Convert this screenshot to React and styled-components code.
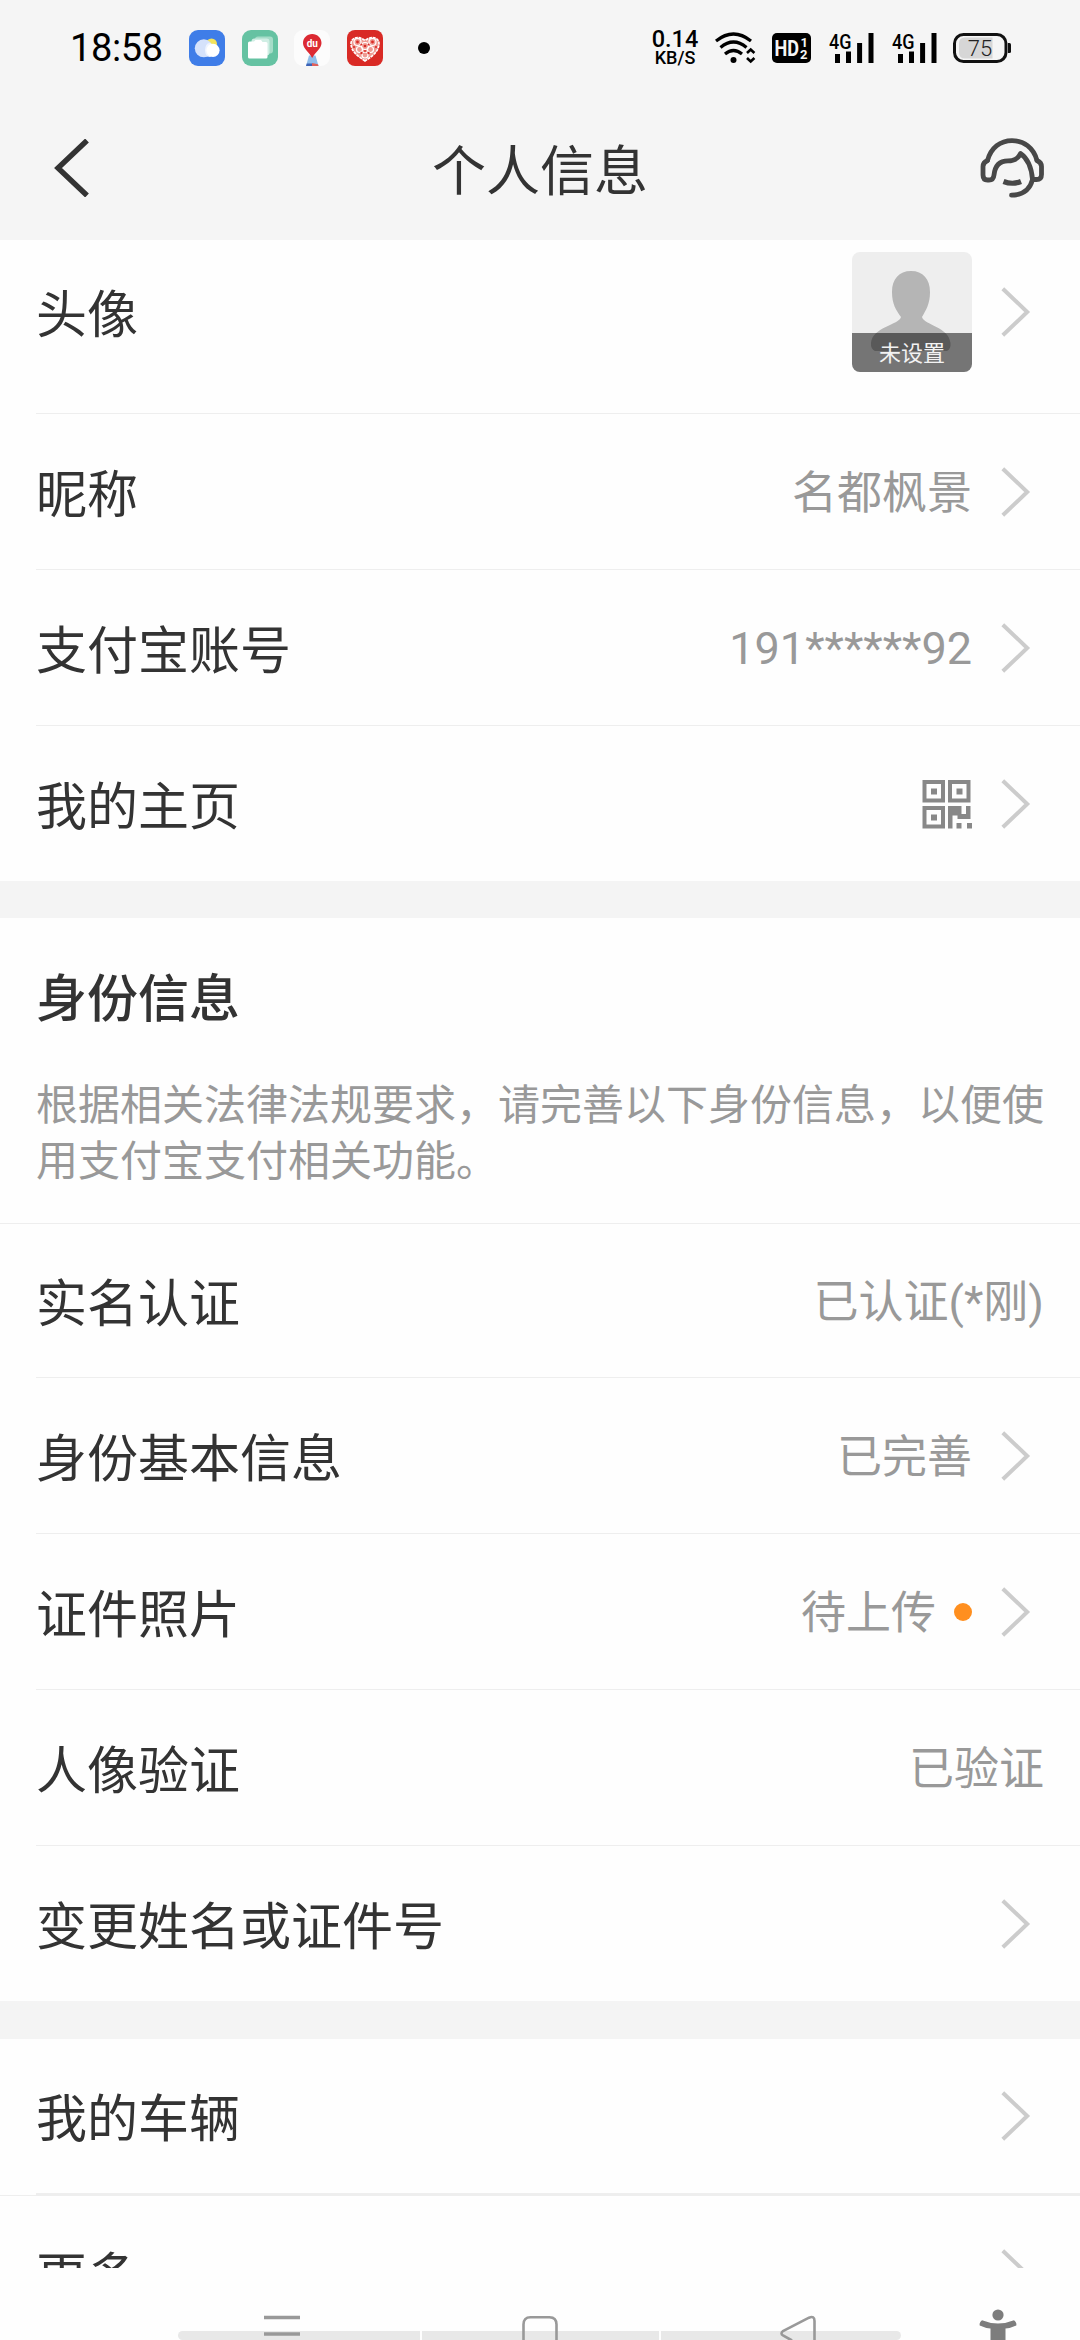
import React from "react";
import styled, { createGlobalStyle } from "styled-components";

const GlobalStyle = createGlobalStyle`
  * { box-sizing: border-box; }
  body {
    margin: 0;
    background: #fefefe;
    font-family: Roboto, "Noto Sans CJK SC", sans-serif;
    color: #333;
  }
  svg { display: block; flex: none; }
`;

const Screen = styled.div`
  width: 1080px;
  height: 2340px;
  display: flex;
  flex-direction: column;
  overflow: hidden;
  background: #fefefe;
`;

const StatusBar = styled.div`
  height: 96px;
  flex: none;
  padding: 0 68px 0 70px;
  display: flex;
  align-items: center;
  justify-content: space-between;
  background: #f5f5f5;
  color: #000;
`;

const StatusLeft = styled.div`
  display: flex;
  align-items: center;
`;

const Clock = styled.span`
  width: 119px;
  font-size: 38px;
  line-height: 44px;
  letter-spacing: -0.4px;
`;

const AppIcons = styled.div`
  display: flex;
  gap: 16.7px;
`;

const MoreDot = styled.span`
  width: 12px;
  height: 12px;
  margin-left: 35px;
  border-radius: 50%;
  background: #000;
`;

const StatusRight = styled.div`
  display: flex;
  align-items: center;
`;

const NetSpeed = styled.div`
  width: 46px;
  margin-right: 17px;
  display: flex;
  flex-direction: column;
  align-items: center;
  font-weight: 500;
`;

const SpeedValue = styled.span`
  font-size: 23.5px;
  line-height: 19px;
  padding-top: 1px;
`;

const SpeedUnit = styled.span`
  font-size: 18px;
  line-height: 18px;
`;

const SignalGroup = styled.div`
  display: flex;
  gap: 18px;
  margin: 0 16px 0 18px;
`;

const HdSlot = styled.div`
  margin-left: 16px;
`;

const TitleBar = styled.header`
  height: 144px;
  flex: none;
  padding: 0 36px 0 54px;
  display: grid;
  grid-template-columns: 64px 1fr 64px;
  align-items: center;
  background: #f5f5f5;
`;

const Title = styled.h1`
  margin: 10px 0 0;
  padding-right: 18px;
  text-align: center;
  font-size: 54px;
  font-weight: 400;
  line-height: 60px;
`;

const Content = styled.main`
  height: 2028px;
  flex: none;
  overflow: hidden;
`;

const Group = styled.section`
  margin-bottom: ${(p) => p.$gap || 0}px;
  background: #fefefe;
`;

const Page = styled.div`
  background: #f4f4f4;
`;

const Row = styled.div`
  height: ${(p) => p.$height || 156}px;
  margin-left: 36px;
  padding: ${(p) => p.$pad || "0"};
  padding-right: 36px;
  display: flex;
  align-items: center;
  justify-content: space-between;
  border-bottom: ${(p) => (p.$line === undefined ? 1 : p.$line)}px solid #eee;
`;

const FullLine = styled.div`
  height: 1px;
  background: #eee;
`;

const Label = styled.span`
  font-size: 51px;
  line-height: 60px;
  white-space: nowrap;
  padding-top: 8px;
`;

const Value = styled.span`
  font-size: 45px;
  line-height: 54px;
  color: #999;
  white-space: nowrap;
  padding-top: ${(p) => (p.$latin ? 2 : 5)}px;
`;

const Trailing = styled.div`
  display: flex;
  align-items: center;
`;

const ArrowSlot = styled.span`
  width: 72px;
  padding-left: 29px;
`;

const Badge = styled.span`
  width: 18px;
  height: 18px;
  margin-left: 18px;
  border-radius: 50%;
  background: #ff8f1f;
`;

const Avatar = styled.div`
  position: relative;
  width: 120px;
  height: 120px;
  border-radius: 8px;
  overflow: hidden;
  background: #eee;
`;

const AvatarCaption = styled.span`
  position: absolute;
  left: 0;
  right: 0;
  bottom: 0;
  height: 39px;
  padding-top: 2px;
  background: rgba(0, 0, 0, 0.51);
  color: #f2f2f2;
  font-size: 22px;
  line-height: 38px;
  text-align: center;
`;

const SectionIntro = styled.div`
  height: 306px;
  padding: 52px 36px 0;
  border-bottom: 1px solid #eee;
`;

const SectionTitle = styled.h2`
  margin: 0;
  font-size: 51px;
  line-height: 60px;
  font-weight: 500;
`;

const SectionText = styled.p`
  margin: 48px 0 0;
  font-size: 42px;
  line-height: 56px;
  color: #999;
  white-space: nowrap;
`;

const NavBar = styled.nav`
  position: relative;
  height: 72px;
  flex: none;
  padding-left: 264px;
  display: flex;
  align-items: flex-end;
  background: #fefefe;
`;

const NavTray = styled.div`
  position: absolute;
  left: 178px;
  bottom: 0;
  width: 723px;
  height: 9px;
  display: flex;
  gap: 2px;
  border-radius: 5px;
  overflow: hidden;
`;

const TrayPart = styled.span`
  flex: ${(p) => p.$w};
  background: #e8e8e8;
`;

const NavItem = styled.span`
  position: relative;
  margin-right: ${(p) => p.$after || 0}px;
`;

const Arrow = () => (
  <svg width="30" height="50" viewBox="0 0 30 50">
    <path d="M1.8 1.8 L26.2 25 L1.8 48.2" fill="none" stroke="#ccc" strokeWidth="4" />
  </svg>
);

const WeatherIcon = () => (
  <svg width="36" height="36" viewBox="0 0 36 36">
    <rect width="36" height="36" rx="9" fill="#3f7de8" />
    <circle cx="22.5" cy="14" r="5.5" fill="#f3e35c" />
    <circle cx="14.800" cy="18.300" r="9" fill="#d5e2fb" />
    <ellipse cx="20.500" cy="20" rx="4.500" ry="7" fill="#eef4ff" />
    <circle cx="24" cy="20.300" r="6.600" fill="#fff" />
  </svg>
);

const NotesIcon = () => (
  <svg width="36" height="36" viewBox="0 0 36 36">
    <rect width="36" height="36" rx="9" fill="#65c2a2" />
    <rect x="13" y="6.5" width="18" height="17" rx="3" fill="#a5dcc8" />
    <rect x="9.5" y="8.5" width="18" height="17" rx="3" fill="#d0eee4" />
    <path d="M6 13 q0-1.5 1.5-1.5 H12 l1.5-1.5 H19 l1.5 2 H24 q1.5 0 1.5 1.5 V27 q0 1.5-1.5 1.5 H7.5 Q6 28.500 6 27Z" fill="#fff" />
  </svg>
);

const PinText = styled.text`
  font: 700 10px Roboto, sans-serif;
  fill: #fff;
`;

const MapIcon = () => (
  <svg width="36" height="36" viewBox="0 0 36 36">
    <rect width="36" height="36" rx="9" fill="#fcfcfc" />
    <path d="M15 25.500 H21.500 L24.500 36 H12Z" fill="#8fbdea" />
    <path d="M12.800 33.500 H18 V36 H12Z" fill="#3c62b5" />
    <path d="M18 33 L24 34.200 L24.500 36 H18Z" fill="#e0605a" />
    <path d="M18.200 4 C23.500 4 27.500 8 27.500 13 C27.500 19 21 22 18.200 28 C15.400 22 9 19 9 13 C9 8 13 4 18.200 4Z" fill="#dc2a33" />
    <PinText x="18.300" y="16.800" textAnchor="middle">du</PinText>
  </svg>
);

const HeartIcon = () => (
  <svg width="36" height="36" viewBox="0 0 36 36">
    <rect width="36" height="36" rx="8" fill="#d92a25" />
    <path
      d="M18 31 C12 27 4 22 4 13.500 C4 8 11 5 18 10.500 C25 5 32 8 32 13.500 C32 22 24 27 18 31Z"
      fill="#ef9a92"
      stroke="#fff"
      strokeWidth="1.600"
      strokeDasharray="3 0.800"
    />
    <g fill="none" stroke="#fff" strokeWidth="1.200">
      <circle cx="10.500" cy="12" r="3.500" />
      <circle cx="25.500" cy="12" r="3.500" />
      <circle cx="18" cy="16" r="3.500" />
      <circle cx="12.500" cy="19.500" r="3" />
      <circle cx="23.500" cy="19.500" r="3" />
      <circle cx="18" cy="25" r="3" />
    </g>
    <g fill="#d92a25">
      <circle cx="10.500" cy="12" r="1.400" />
      <circle cx="25.500" cy="12" r="1.400" />
      <circle cx="18" cy="16" r="1.300" />
      <circle cx="14.500" cy="23" r="1.200" />
      <circle cx="21.500" cy="23" r="1.200" />
      <circle cx="7" cy="17" r="1.100" />
      <circle cx="29" cy="17" r="1.100" />
      <circle cx="18" cy="21" r="1" />
      <circle cx="14.300" cy="14.500" r="1" />
      <circle cx="21.700" cy="14.500" r="1" />
    </g>
  </svg>
);

const WifiIcon = () => (
  <svg width="41" height="32" viewBox="0 0 41 32">
    <g fill="none" stroke="#000" strokeWidth="3.200">
      <path d="M1 9 Q18.500 -5 36 9" />
      <path d="M5.500 15.500 Q18.500 4.500 31.500 15.500" />
      <path d="M10 22 Q18.500 15 27 22" />
    </g>
    <circle cx="18.500" cy="28" r="3" />
    <path d="M32 21 L35.700 17.500 L39.400 21 M32 26 L35.700 29.500 L39.400 26" fill="none" stroke="#000" strokeWidth="2.600" />
  </svg>
);

const HdText = styled.text`
  font: 700 ${(p) => p.$size}px Roboto, sans-serif;
  fill: #f5f5f5;
`;

const HdIcon = () => (
  <svg width="39" height="30" viewBox="0 0 39 30">
    <rect width="39" height="30" rx="5" />
    <HdText $size={22} x="2.500" y="23" textLength="24.500" lengthAdjust="spacingAndGlyphs">HD</HdText>
    <HdText $size={13} x="28.500" y="13.500">1</HdText>
    <HdText $size={13} x="28" y="26">2</HdText>
  </svg>
);

const NetText = styled.text`
  font: 500 19.5px Roboto, sans-serif;
  fill: #000;
`;

const SignalIcon = () => (
  <svg width="45" height="32" viewBox="0 0 45 32">
    <NetText x="0" y="16.500" textLength="22.500" lengthAdjust="spacingAndGlyphs">4G</NetText>
    <g stroke="#000" strokeWidth="5" strokeLinecap="butt">
      <path d="M8.500 22 V31" />
      <path d="M19.500 19.500 V31" />
      <path d="M30.600 11 V31" />
      <path d="M42 1 V31" />
    </g>
  </svg>
);

const BatteryText = styled.text`
  font: 300 22px Roboto, sans-serif;
  fill: #222;
`;

const BatteryIcon = () => (
  <svg width="59" height="30" viewBox="0 0 59 30">
    <path d="M12 4.500 H39.500 V25.500 H12 Q6 25.500 6 19.500 V10.500 Q6 4.500 12 4.500Z" fill="#d6d6d6" />
    <rect x="1.500" y="1.500" width="51.500" height="27" rx="9" fill="none" stroke="#111" strokeWidth="3" />
    <path d="M55 10 H56.500 Q58 10 58 11.500 V18.500 Q58 20 56.500 20 H55Z" fill="#111" />
    <BatteryText x="27" y="22.500" textAnchor="middle">75</BatteryText>
  </svg>
);

const BackIcon = () => (
  <svg width="36" height="58" viewBox="0 0 36 58">
    <path d="M33 1.500 L4 29 L33 56.500" fill="none" stroke="#333" strokeWidth="5.400" />
  </svg>
);

const ServiceIcon = () => (
  <svg width="64" height="60" viewBox="0 0 64 60">
    <g fill="none" stroke="#484848" strokeWidth="4.800" strokeLinecap="round" strokeLinejoin="round">
      <path d="M7.500 22.500 C11 9.500 20.500 2.600 32 2.600 C43.500 2.600 53.500 9.500 57 22.500" />
      <path d="M7.500 22.500 Q3 24.500 3 28.500 V37 Q3 42 7.500 42 H9 Q13.500 42 14 37 C15 27 20 22.800 28 22.800 C34 22.800 38 21 40.500 15.500 C47 20 51.500 29 52.500 41.500 H56.500 Q61.500 41.500 61.500 36.500 V28.500 Q61.500 24.500 57 22.500" />
      <path d="M52.500 41.500 C50 51.500 43 57 31.500 57.200" />
      <path d="M23.500 43.500 Q32.500 47 41 43.500" strokeLinecap="butt" strokeWidth="5.200" />
    </g>
  </svg>
);

const PersonShape = () => (
  <svg width="120" height="120" viewBox="0 0 120 120">
    <path
      d="M59 19 C71 19 78 27 78 40 C78 52 74 58 70 65 C72 73 97 75 98.500 91 Q99 97 95 99 H23 Q18.500 97 19 91 C20.500 75 47 73 49 65 C44 58 40 52 40 40 C40 27 47 19 59 19Z"
      fill="#b5b5b5"
    />
  </svg>
);

const QrIcon = () => (
  <svg width="50" height="51" viewBox="0 -2 50 51">
    <g fill="none" stroke="#888" strokeWidth="4">
      <rect x="2.500" y="2" width="18.500" height="18.500" />
      <rect x="28" y="2" width="18.500" height="18.500" />
      <rect x="2.500" y="28" width="18.500" height="18.500" />
    </g>
    <g fill="#888">
      <rect x="9" y="8.500" width="6" height="6" />
      <rect x="34.500" y="8.500" width="6" height="6" />
      <rect x="9" y="34.500" width="6" height="6" />
      <path d="M26 26 H39.500 V34 H44 V26 H48.500 V39 H35.500 V35.500 H30.500 V48.500 H26Z" />
      <rect x="34.500" y="43" width="5" height="5.500" />
      <rect x="45" y="43" width="5" height="5.500" />
    </g>
  </svg>
);

const MenuIcon = () => (
  <svg width="36" height="25" viewBox="0 0 36 25">
    <path d="M0 2.500 H36 M0 19 H36" stroke="#999" strokeWidth="3.400" />
  </svg>
);

const HomeIcon = () => (
  <svg width="36" height="25" viewBox="0 0 36 25">
    <path d="M1.500 25 V9.500 Q1.500 2.200 8.500 2.200 H27.500 Q34.500 2.200 34.500 9.500 V25" fill="none" stroke="#999" strokeWidth="2.600" />
  </svg>
);

const ReturnIcon = () => (
  <svg width="36" height="25" viewBox="0 0 36 25">
    <path d="M12 25.500 L3 20.500 Q0 18.500 3 16 L29 2.700 Q34.500 0.500 34.500 6 V26" fill="none" stroke="#999" strokeWidth="2.600" />
  </svg>
);

const AccessIcon = () => (
  <svg width="38" height="32" viewBox="0 0 38 32">
    <g fill="#7d7d7d">
      <circle cx="19" cy="7" r="5.600" />
      <path d="M3 12.200 Q19 18.800 35 12.200 Q38 14.500 37.300 17.500 Q32 20 26.500 20.500 V32 H11.500 V20.500 Q6 20 0.700 17.500 Q0 14.500 3 12.200Z" />
    </g>
  </svg>
);

function Item({ label, value, latin, arrow = true, badge, children, ...row }) {
  return (
    <Row {...row}>
      <Label>{label}</Label>
      <Trailing>
        {value && <Value $latin={latin}>{value}</Value>}
        {children}
        {badge && <Badge />}
        {arrow && (
          <ArrowSlot>
            <Arrow />
          </ArrowSlot>
        )}
      </Trailing>
    </Row>
  );
}

export default function App() {
  return (
    <Screen lang="zh-CN">
      <GlobalStyle />
      <StatusBar>
        <StatusLeft>
          <Clock>18:58</Clock>
          <AppIcons>
            <WeatherIcon />
            <NotesIcon />
            <MapIcon />
            <HeartIcon />
          </AppIcons>
          <MoreDot />
        </StatusLeft>
        <StatusRight>
          <NetSpeed>
            <SpeedValue>0.14</SpeedValue>
            <SpeedUnit>KB/S</SpeedUnit>
          </NetSpeed>
          <WifiIcon />
          <HdSlot>
            <HdIcon />
          </HdSlot>
          <SignalGroup>
            <SignalIcon />
            <SignalIcon />
          </SignalGroup>
          <BatteryIcon />
        </StatusRight>
      </StatusBar>
      <TitleBar>
        <BackIcon />
        <Title>个人信息</Title>
        <ServiceIcon />
      </TitleBar>
      <Content>
        <Page>
          <Group $gap={37}>
            <Item label="头像" $height={174} $pad="0 0 29px">
              <Avatar>
                <PersonShape />
                <AvatarCaption>未设置</AvatarCaption>
              </Avatar>
            </Item>
            <Item label="昵称" value="名都枫景" />
            <Item label="支付宝账号" value="191******92" latin />
            <Item label="我的主页" $height={155} $line={0}>
              <QrIcon />
            </Item>
          </Group>
          <Group $gap={38}>
            <SectionIntro>
              <SectionTitle>身份信息</SectionTitle>
              <SectionText>
                根据相关法律法规要求，请完善以下身份信息，以便使
                <br />
                用支付宝支付相关功能。
              </SectionText>
            </SectionIntro>
            <Item label="实名认证" value="已认证(*刚)" arrow={false} $height={154} />
            <Item label="身份基本信息" value="已完善" />
            <Item label="证件照片" value="待上传" badge />
            <Item label="人像验证" value="已验证" arrow={false} />
            <Item label="变更姓名或证件号" $height={155} $line={0} />
          </Group>
          <Group>
            <Item label="我的车辆" $height={156} $line={2} />
            <FullLine />
            <Item label="更多" $line={0} />
          </Group>
        </Page>
      </Content>
      <NavBar>
        <NavTray>
          <TrayPart $w={242} />
          <TrayPart $w={237} />
          <TrayPart $w={240} />
        </NavTray>
        <NavItem $after={222}>
          <MenuIcon />
        </NavItem>
        <NavItem $after={222}>
          <HomeIcon />
        </NavItem>
        <NavItem $after={163}>
          <ReturnIcon />
        </NavItem>
        <NavItem>
          <AccessIcon />
        </NavItem>
      </NavBar>
    </Screen>
  );
}
